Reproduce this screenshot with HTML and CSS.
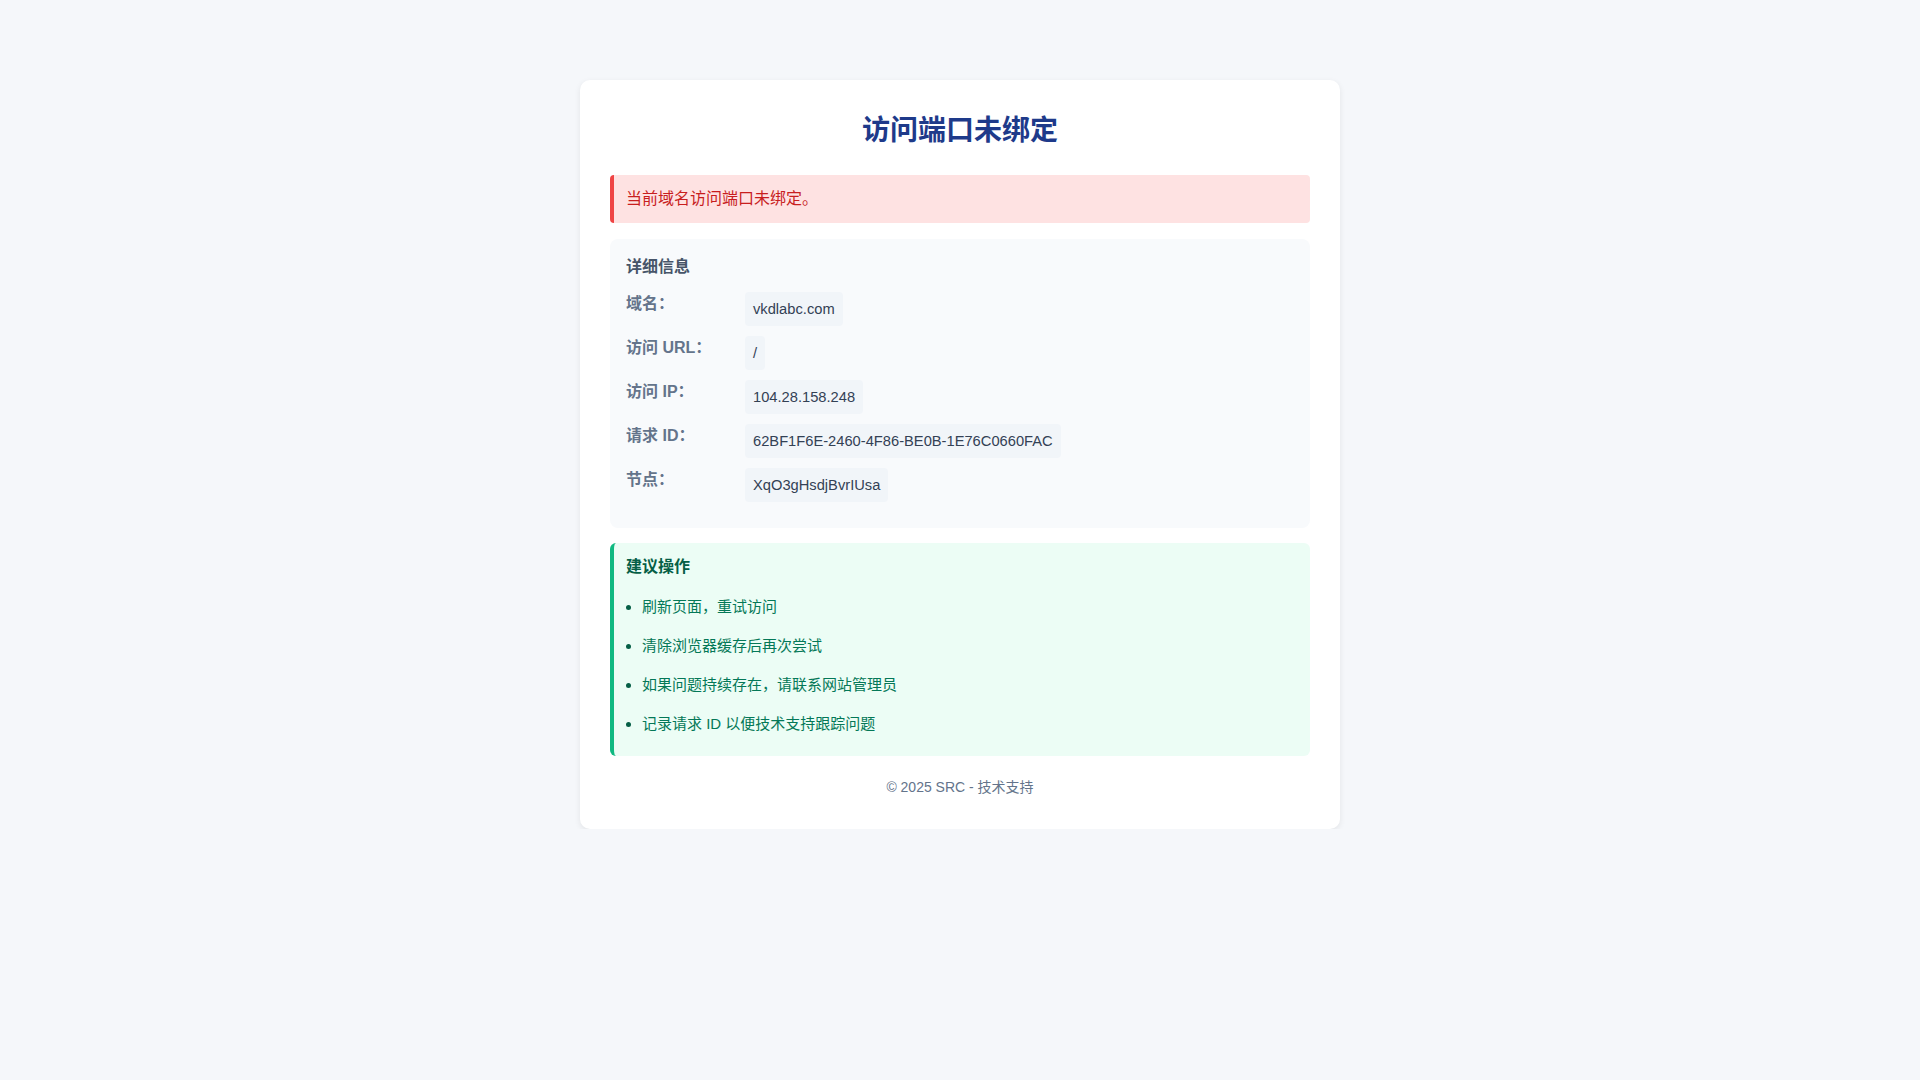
FILE: index.html
```html
<!DOCTYPE html>
<html lang="zh-CN">
<head>
<meta charset="utf-8">
<title>访问端口未绑定</title>
<link rel="stylesheet" href="styles.css">
</head>
<body>
<div class="card">
  <h1 class="title">访问端口未绑定</h1>
  <div class="alert">当前域名访问端口未绑定。</div>
  <div class="details">
    <h3 class="details-title">详细信息</h3>
    <div class="row"><div class="label">域名：</div><div class="value">vkdlabc.com</div></div>
    <div class="row"><div class="label">访问 URL：</div><div class="value">/</div></div>
    <div class="row"><div class="label">访问 IP：</div><div class="value">104.28.158.248</div></div>
    <div class="row"><div class="label">请求 ID：</div><div class="value">62BF1F6E-2460-4F86-BE0B-1E76C0660FAC</div></div>
    <div class="row"><div class="label">节点：</div><div class="value">XqO3gHsdjBvrIUsa</div></div>
  </div>
  <div class="suggest">
    <h3 class="suggest-title">建议操作</h3>
    <ul class="suggest-list">
      <li>刷新页面，重试访问</li>
      <li>清除浏览器缓存后再次尝试</li>
      <li>如果问题持续存在，请联系网站管理员</li>
      <li>记录请求 ID 以便技术支持跟踪问题</li>
    </ul>
  </div>
  <div class="footer">© 2025 SRC - 技术支持</div>
</div>
</body>
</html>
```

FILE: styles.css
```css
html, body {
  margin: 0;
  padding: 0;
}
body {
  background: #f5f7fa;
  font-family: "Liberation Sans", "Noto Sans CJK SC", sans-serif;
  color: #334155;
  padding-top: 80px;
}
.card {
  width: 760px;
  box-sizing: border-box;
  margin: 0 auto;
  background: #ffffff;
  border-radius: 10px;
  box-shadow: 0 2px 6px rgba(0, 0, 0, 0.08);
  padding: 30px;
}
.title {
  margin: 0 0 23px;
  font-size: 28px;
  line-height: 42px;
  font-weight: 700;
  color: #1e3a8a;
  text-align: center;
}
.alert {
  background: #fee2e2;
  border-left: 4px solid #ef4444;
  border-radius: 4px;
  padding: 12px;
  font-size: 16px;
  line-height: 24px;
  color: #c81e1e;
}
.details {
  margin-top: 16px;
  background: #f8fafc;
  border-radius: 8px;
  padding: 16px 16px 16px;
}
.details-title {
  margin: 0 0 13px;
  font-size: 16px;
  line-height: 24px;
  font-weight: 700;
  color: #475569;
}
.row {
  display: flex;
  align-items: flex-start;
  margin-bottom: 10px;
}
.label {
  width: 119px;
  flex-shrink: 0;
  font-size: 16px;
  line-height: 24px;
  font-weight: 700;
  color: #64748b;
}
.value {
  background: #f1f5f9;
  border-radius: 4px;
  padding: 6px 8px;
  font-size: 14.7px;
  line-height: 22px;
  color: #334155;
}
.suggest {
  margin-top: 15px;
  background: #ecfdf5;
  border-left: 4px solid #10b981;
  border-radius: 6px;
  padding: 12px 12px 20px;
}
.suggest-title {
  margin: 0 0 16px;
  font-size: 16px;
  line-height: 24px;
  font-weight: 700;
  color: #065f46;
}
.suggest-list {
  margin: 0;
  padding-left: 16px;
  color: #047857;
  font-size: 15px;
  line-height: 24px;
}
.suggest-list li + li {
  margin-top: 15px;
}
.suggest-list li::marker {
  color: #065f46;
}
.footer {
  margin-top: 21px;
  padding-bottom: 1px;
  text-align: center;
  font-size: 14px;
  line-height: 21px;
  color: #64748b;
}
```
